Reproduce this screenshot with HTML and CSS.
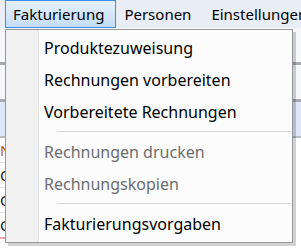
FILE: index.html
```html
<!DOCTYPE html>
<html lang="de">
    <head>
        <meta charset="utf-8" />
        <title>Fakturierung</title>
        <link rel="stylesheet" href="styles.css">
    </head>
    <body>
        <div class="menubar">
            <div class="menubar-item active">Fakturierung</div>
            <div class="menubar-item">Personen</div>
            <div class="menubar-item">Einstellungen</div>
        </div>

        <div class="content">
            <div class="band"></div>
            <div class="band"></div>
            <div class="band band-blue"></div>
            <div class="grid">
                <div class="grid-row accent">N</div>
                <div class="grid-row">O</div>
                <div class="grid-row">O</div>
                <div class="grid-row">O</div>
            </div>
        </div>

        <div class="dropdown">
            <div class="gutter"></div>
            <div class="dropdown-item">Produktezuweisung</div>
            <div class="dropdown-item">Rechnungen vorbereiten</div>
            <div class="dropdown-item">Vorbereitete Rechnungen</div>
            <div class="separator"></div>
            <div class="dropdown-item disabled">Rechnungen drucken</div>
            <div class="dropdown-item disabled">Rechnungskopien</div>
            <div class="separator"></div>
            <div class="dropdown-item">Fakturierungsvorgaben</div>
        </div>
    </body>
</html>
```

FILE: styles.css
```css
body, html {
    margin: 0;
    padding: 0;
    height: 100%;
    overflow: hidden;
    font-family: "Noto Sans", "Open Sans", sans-serif;
    font-size: 15px;
    background: #ffffff;
    color: #000000;
}

.menubar {
    display: flex;
    height: 28px;
    padding-left: 5px;
    overflow: hidden;
    background-color: #e9edf5;
    white-space: nowrap;
}

.menubar-item {
    display: flex;
    align-items: center;
    padding: 0 11px 1px 7px;
    border: 1px solid transparent;
}

.menubar-item.active {
    border-color: #3c8fe0;
    background: linear-gradient(#e6f0fb, #c4ddf6);
}

.content {
    display: flex;
    flex-direction: column;
}

.band {
    height: 34px;
    background-color: #f5f7fb;
    border-bottom: 3px solid #a6aab2;
}

.band-blue {
    background-color: #dfe8f8;
    border-bottom: 2px solid #b9bdc4;
}

.grid {
    display: flex;
    flex-direction: column;
    width: 6px;
    overflow: hidden;
}

.grid-row {
    height: 24px;
    line-height: 24px;
    border-bottom: 1px solid #e4e4e4;
    color: #1a1a1a;
}

.grid-row.accent {
    color: #b65a00;
}

.grid-row:last-child {
    border-bottom: 2px solid #f2a5a5;
}

.dropdown {
    position: absolute;
    top: 29px;
    left: 5px;
    width: 286px;
    padding: 2px 0;
    font-size: 16px;
    background-color: #fcfcfc;
    border: 1px solid #979797;
    box-shadow: 3px 3px 0 0 rgba(0, 0, 0, 0.18);
}

.gutter {
    position: absolute;
    top: 0;
    bottom: 0;
    left: 0;
    width: 32px;
    background-color: #f1f1f1;
    border-right: 1px solid #e2e3e3;
    box-shadow: 1px 0 0 #ffffff;
}

.dropdown-item {
    position: relative;
    height: 32px;
    line-height: 32px;
    padding-left: 38px;
    white-space: nowrap;
}

.dropdown-item.disabled {
    color: #6d6d6d;
}

.separator {
    position: relative;
    height: 1px;
    margin: 3px 1px 3px 51px;
    background-color: #d7d7d7;
    border-bottom: 1px solid #ffffff;
}
```
